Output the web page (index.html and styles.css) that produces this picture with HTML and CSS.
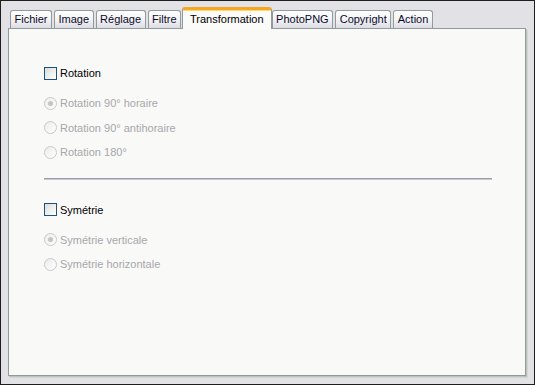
FILE: index.html
```html
<!DOCTYPE html>
<html lang="fr">
<head>
    <meta charset="UTF-8">
    <title>Transformation</title>
    <link rel="stylesheet" href="styles.css">
</head>
<body>
    <div class="window">
        <!-- Onglets -->
        <div class="tabs">
            <span class="tab">Fichier</span>
            <span class="tab">Image</span>
            <span class="tab">Réglage</span>
            <span class="tab">Filtre</span>
            <span class="tab active">Transformation</span>
            <span class="tab">PhotoPNG</span>
            <span class="tab">Copyright</span>
            <span class="tab">Action</span>
        </div>

        <div class="panel">
            <!-- Rotation -->
            <div class="check-row"><span class="check"></span>Rotation</div>
            <div class="options">
                <div class="radio-row"><span class="radio on"></span>Rotation 90° horaire</div>
                <div class="radio-row"><span class="radio"></span>Rotation 90° antihoraire</div>
                <div class="radio-row"><span class="radio"></span>Rotation 180°</div>
            </div>

            <div class="separator"></div>

            <!-- Symétrie -->
            <div class="check-row"><span class="check"></span>Symétrie</div>
            <div class="options">
                <div class="radio-row"><span class="radio on"></span>Symétrie verticale</div>
                <div class="radio-row"><span class="radio"></span>Symétrie horizontale</div>
            </div>
        </div>
    </div>
</body>
</html>
```
FILE: styles.css
```css
body {
    margin: 0;
    font-family: "Liberation Sans", Arial, sans-serif;
    font-size: 11px;
    color: #000;
}
.window {
    width: 535px;
    height: 385px;
    box-sizing: border-box;
    border: 1px solid #1e1e1e;
    background-color: #e1e1e6;
    padding: 6px 7px 8px 7px;
    display: flex;
    flex-direction: column;
}
.tabs {
    display: flex;
    align-items: flex-start;
    height: 21px;
    padding-left: 2px;
    position: relative;
    z-index: 1;
}
.tab {
    margin-top: 3px;
    margin-right: 2px;
    height: 17px;
    line-height: 17px;
    padding: 0 3.5px;
    border: 1px solid #919b9c;
    border-bottom: none;
    border-radius: 3px 3px 0 0;
    background: linear-gradient(#ffffff, #f3f3f6 50%, #dcdce4);
    color: #0a0a28;
    white-space: nowrap;
}
.tab.active {
    margin-top: 0;
    margin-left: -1px;
    margin-right: 0;
    height: 19px;
    line-height: 18px;
    padding: 0 7px;
    border-top: 3px solid #f5a623;
    box-shadow: inset 0 1px 0 #ffd96a;
    background: #fbfbfa;
    color: #000;
}
.panel {
    flex: 1;
    background-color: #f9f9f8;
    border: 1px solid #919b9c;
    box-shadow: 1px 1px 0 #bcc4bd, 2px 2px 0 #d2d6d2;
    padding: 37px 33px 0 35px;
    margin-right: 1px;
}
.check-row, .radio-row {
    display: flex;
    align-items: center;
    height: 14px;
}
.check {
    width: 11px;
    height: 11px;
    border: 1px solid #1c5180;
    background: linear-gradient(135deg, #dcdcd7, #ffffff);
    margin-right: 3px;
}
.options {
    margin-top: 11px;
    color: #a8a7ab;
}
.radio-row {
    height: 24.5px;
}
.radio {
    width: 11px;
    height: 11px;
    border: 1px solid #c9c9c9;
    border-radius: 50%;
    background: linear-gradient(135deg, #ececec, #ffffff);
    margin-right: 3px;
    display: flex;
    align-items: center;
    justify-content: center;
}
.radio.on::after {
    content: "";
    width: 5px;
    height: 5px;
    border-radius: 50%;
    background: #c4c4c4;
}
.separator {
    margin: 13px 0 23px 0;
    border-top: 1px solid #9c9cab;
    border-bottom: 1px solid #c9c9d2;
}
```
